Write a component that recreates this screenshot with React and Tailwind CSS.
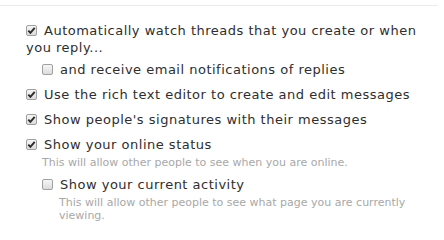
import React from "react";

function Box({ checked }) {
  return (
    <span className="inline-block relative w-[11px] h-[11px] mr-[7px] align-[-1px] rounded-[2px] border border-[#a0a0a0] bg-gradient-to-b from-[#f6f6f6] to-[#dcdcdc]">
      {checked && (
        <svg viewBox="0 0 11 11" className="absolute -left-px -top-px w-[11px] h-[11px]">
          <path d="M2.3 5.6 L4.4 7.8 L8.7 2.8" fill="none" stroke="#2b2b2b" strokeWidth="1.9" />
        </svg>
      )}
    </span>
  );
}

const Hint = ({ children }) => (
  <p className="mt-[3px] text-[11px] leading-[13px] tracking-normal text-[#a8a8a8]">{children}</p>
);

export default function App() {
  return (
    <div className="w-[444px] h-[226px] bg-white font-['DejaVu_Sans',Verdana,sans-serif] text-[13px] tracking-[0.5px] text-[#2e2e2e]">
      <div className="h-[5px]" />
      <div className="w-[438px] border-t border-[#e4ecf4] pt-[16px] pl-[26px] pr-[8px]">
        <ul className="flex flex-col gap-[8px]">
          <li>
            <label className="block leading-[17px]">
              <Box checked />
              Automatically watch threads that you create or when you reply...
            </label>
            <label className="block leading-[17px] pl-[16px] mt-[5px]">
              <Box />
              and receive email notifications of replies
            </label>
          </li>
          <li>
            <label className="block leading-[17px]">
              <Box checked />
              Use the rich text editor to create and edit messages
            </label>
          </li>
          <li>
            <label className="block leading-[17px]">
              <Box checked />
              Show people's signatures with their messages
            </label>
          </li>
          <li>
            <label className="block leading-[17px]">
              <Box checked />
              Show your online status
            </label>
            <div className="pl-[16px]">
              <Hint>This will allow other people to see when you are online.</Hint>
              <label className="block leading-[17px] mt-[7px]">
                <Box />
                Show your current activity
              </label>
              <div className="pl-[17px]">
                <Hint>This will allow other people to see what page you are currently viewing.</Hint>
              </div>
            </div>
          </li>
        </ul>
      </div>
    </div>
  );
}
